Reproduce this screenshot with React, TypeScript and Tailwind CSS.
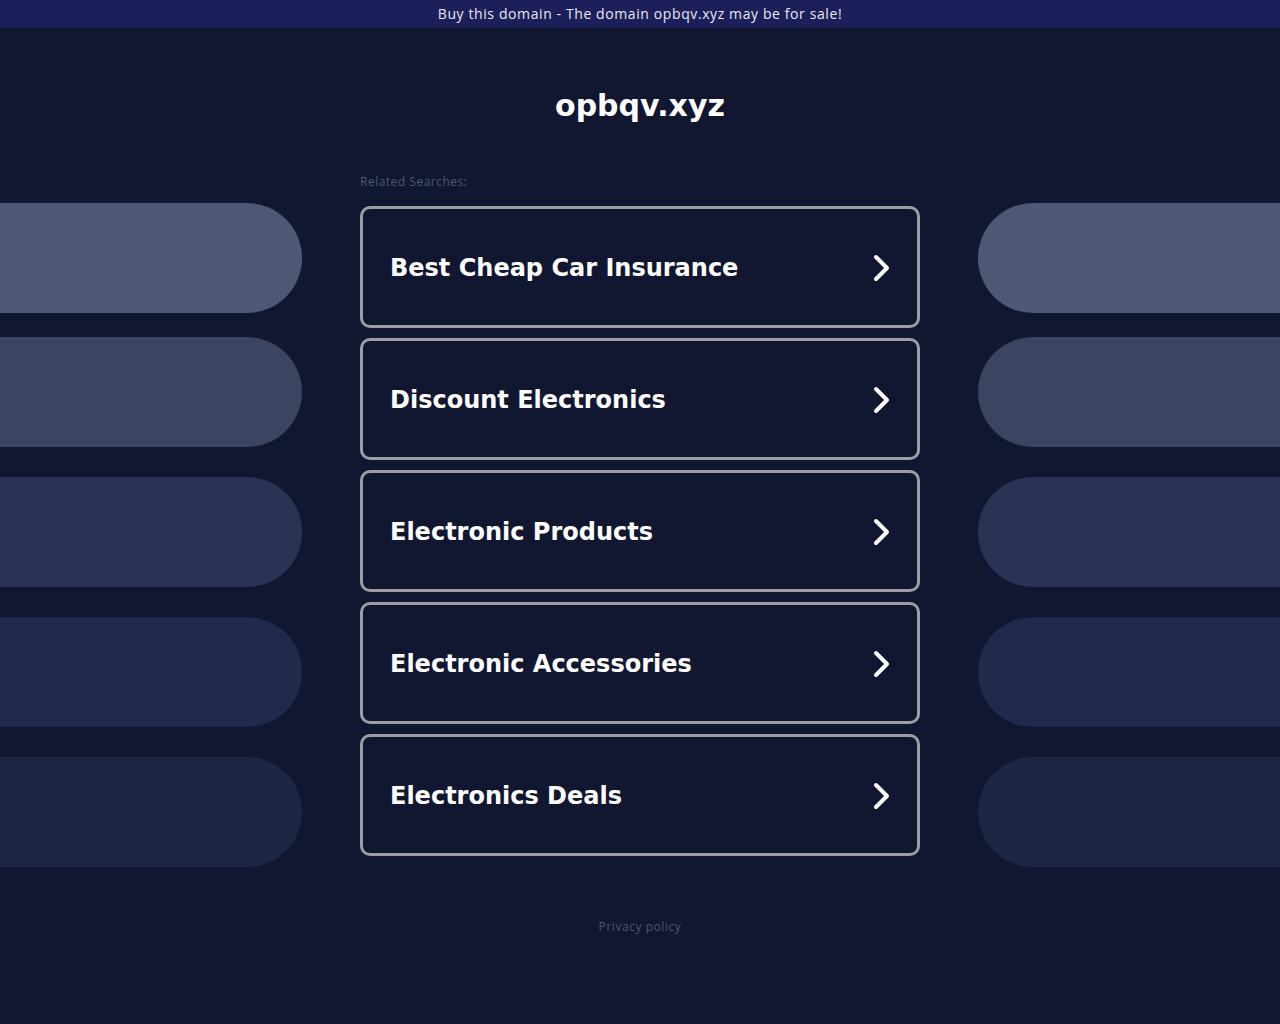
import React from "react";

const searches = [
  "Best Cheap Car Insurance",
  "Discount Electronics",
  "Electronic Products",
  "Electronic Accessories",
  "Electronics Deals",
];

// decorative side pills, top to bottom
const pills = [
  { bg: "bg-[#4d5874]", mt: "mt-0" },
  { bg: "bg-[#3b4461]", mt: "mt-[24px]" },
  { bg: "bg-[#2a3353]", mt: "mt-[30px]" },
  { bg: "bg-[#212a4a]", mt: "mt-[30px]" },
  { bg: "bg-[#1d2645]", mt: "mt-[30px]" },
];

function Chevron() {
  return (
    <svg width="24" height="32" viewBox="0 0 24 32" fill="none">
      <path
        d="M7 5 L18 16 L7 27"
        stroke="white"
        strokeWidth="4"
        strokeLinecap="round"
        strokeLinejoin="round"
      />
    </svg>
  );
}

function PillColumn({ side }: { side: "left" | "right" }) {
  return (
    <div className="w-[302px] shrink-0 pt-[30px] flex flex-col">
      {pills.map((p, i) => (
        <div
          key={i}
          className={`h-[110px] ${p.bg} ${p.mt} ${
            side === "left" ? "rounded-r-full" : "rounded-l-full"
          }`}
        />
      ))}
    </div>
  );
}

export default function App() {
  return (
    <div className="min-h-screen bg-[#111730] text-white">
      {/* Sale banner */}
      <div className="h-[28px] bg-[#1d1f5b] flex items-center justify-center">
        <span className="text-[14px] leading-[20px] text-[#e8e9f2] font-['Open_Sans',sans-serif] tracking-[0.6px]">
          Buy this domain - The domain opbqv.xyz may be for sale!
        </span>
      </div>

      <h1 className="mt-[60px] text-center text-[30px] leading-[36px] font-bold font-['DejaVu_Sans',sans-serif]">
        opbqv.xyz
      </h1>

      <div className="mt-[49px] flex gap-[58px]">
        <PillColumn side="left" />

        <div className="w-[560px] shrink-0">
          <div className="mt-[1px] h-[16px] leading-[16px] text-[12px] text-[#4f5872] font-['Open_Sans',sans-serif] tracking-[0.5px]">
            Related Searches:
          </div>
          <div className="mt-[16px] flex flex-col gap-[10px]">
            {searches.map((s) => (
              <a
                key={s}
                href="#"
                className="h-[122px] border-[3px] border-[#9c9ea3] rounded-[10px] flex items-center justify-between pt-[2px] pl-[27px] pr-[24px]"
              >
                <span className="text-[24px] font-bold font-['DejaVu_Sans',sans-serif]">
                  {s}
                </span>
                <Chevron />
              </a>
            ))}
          </div>
        </div>

        <PillColumn side="right" />
      </div>

      <div className="mt-[52px] text-center text-[12px] leading-[16px] text-[#4d5571] font-['Open_Sans',sans-serif] tracking-[0.55px]">
        Privacy policy
      </div>
    </div>
  );
}
